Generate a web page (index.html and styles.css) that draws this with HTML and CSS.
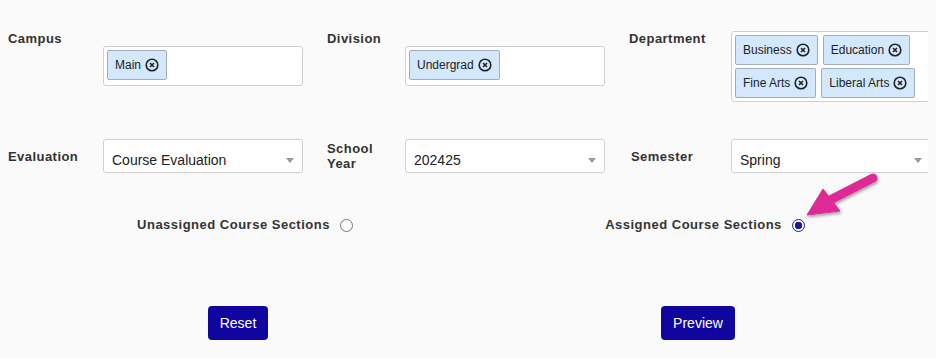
FILE: index.html
```html
<!DOCTYPE html>
<html lang="en">
<head>
    <meta charset="UTF-8">
    <meta name="viewport" content="width=device-width, initial-scale=1.0">
    <title>Course Section Report</title>
    <link rel="stylesheet" href="styles.css">
</head>
<body>
    <form class="report-form">
        <div class="filter-row filter-row-top">
            <div class="field field-1">
                <label class="field-label">Campus</label>
                <div class="multi-box">
                    <span class="chip">Main <span class="chip-x"><svg viewBox="0 0 14 14"><circle cx="7" cy="7" r="5.8"/><path d="M5 5l4 4M9 5l-4 4"/></svg></span></span>
                </div>
            </div>
            <div class="field field-2">
                <label class="field-label">Division</label>
                <div class="multi-box">
                    <span class="chip">Undergrad <span class="chip-x"><svg viewBox="0 0 14 14"><circle cx="7" cy="7" r="5.8"/><path d="M5 5l4 4M9 5l-4 4"/></svg></span></span>
                </div>
            </div>
            <div class="field field-3">
                <label class="field-label">Department</label>
                <div class="multi-box">
                    <span class="chip">Business <span class="chip-x"><svg viewBox="0 0 14 14"><circle cx="7" cy="7" r="5.8"/><path d="M5 5l4 4M9 5l-4 4"/></svg></span></span>
                    <span class="chip">Education <span class="chip-x"><svg viewBox="0 0 14 14"><circle cx="7" cy="7" r="5.8"/><path d="M5 5l4 4M9 5l-4 4"/></svg></span></span>
                    <span class="chip">Fine Arts <span class="chip-x"><svg viewBox="0 0 14 14"><circle cx="7" cy="7" r="5.8"/><path d="M5 5l4 4M9 5l-4 4"/></svg></span></span>
                    <span class="chip">Liberal Arts <span class="chip-x"><svg viewBox="0 0 14 14"><circle cx="7" cy="7" r="5.8"/><path d="M5 5l4 4M9 5l-4 4"/></svg></span></span>
                </div>
            </div>
        </div>

        <div class="filter-row filter-row-mid">
            <div class="field field-1">
                <label class="field-label">Evaluation</label>
                <div class="select-box">Course Evaluation <span class="caret"></span></div>
            </div>
            <div class="field field-2">
                <label class="field-label">School Year</label>
                <div class="select-box">202425 <span class="caret"></span></div>
            </div>
            <div class="field field-3">
                <label class="field-label semester">Semester</label>
                <div class="select-box">Spring <span class="caret"></span></div>
            </div>
        </div>

        <div class="half-row radio-row">
            <label class="radio-opt">Unassigned Course Sections <span class="radio"></span></label>
            <label class="radio-opt">Assigned Course Sections <span class="radio checked"></span></label>
        </div>

        <div class="half-row button-row">
            <div><button type="button" class="btn">Reset</button></div>
            <div><button type="button" class="btn">Preview</button></div>
        </div>
    </form>

    <!-- callout arrow pointing at the selected option -->
    <svg class="callout" width="936" height="358" viewBox="0 0 936 358">
        <defs>
            <filter id="shadow" x="-20%" y="-20%" width="140%" height="140%">
                <feDropShadow dx="1" dy="2" stdDeviation="1.5" flood-color="#000" flood-opacity="0.35"/>
            </filter>
        </defs>
        <g filter="url(#shadow)" fill="#dd2c97" stroke="#dd2c97">
            <line x1="873" y1="178" x2="832" y2="199" stroke-width="9" stroke-linecap="round"/>
            <polygon points="807,215 823,189 840,211" stroke-width="1" stroke-linejoin="round"/>
        </g>
    </svg>
</body>
</html>
```

FILE: styles.css
```css
html {
    overflow: hidden;
}
body {
    margin: 8px;
    background-color: #fafafa;
    font-family: "Liberation Sans", Arial, sans-serif;
    color: #222;
}
.report-form {
    padding-top: 22px;
}
.filter-row {
    display: grid;
    grid-template-columns: 319px 302px 302px;
    width: 923px;
}
.field {
    display: flex;
}
.field-1 .field-label { width: 95px; }
.field-2 .field-label { width: 78px; padding-right: 14px; }
.field-3 .field-label { width: 102px; }
.field-label {
    box-sizing: border-box;
    flex: none;
    font-size: 13px;
    font-weight: bold;
    color: #333;
    line-height: 15px;
    letter-spacing: 0.45px;
}
.filter-row-top {
    height: 72px;
}
.filter-row-top .field-label {
    padding-top: 1px;
}
.filter-row-top .field {
    align-items: flex-start;
}
.multi-box {
    box-sizing: border-box;
    flex: none;
    width: 200px;
    min-height: 40px;
    align-self: center;
    background: #fff;
    border: 1px solid #cfcfcf;
    border-radius: 3px;
    padding: 3px;
    display: flex;
    flex-wrap: wrap;
    gap: 3px 5px;
}
.chip {
    box-sizing: border-box;
    height: 30px;
    display: inline-flex;
    align-items: center;
    gap: 4px;
    padding: 0 7px;
    background: #d3e8fd;
    border: 1px solid #a3adb8;
    border-radius: 2px;
    font-size: 12px;
    color: #222;
}
.chip-x svg {
    display: block;
    width: 14px;
    height: 14px;
    fill: none;
    stroke: #222;
    stroke-width: 1.6;
}
.filter-row-mid {
    margin-top: 37px;
    align-items: center;
}
.filter-row-mid .field {
    align-items: center;
}
.filter-row-mid .semester {
    padding-left: 2px;
}
.select-box {
    box-sizing: border-box;
    flex: none;
    position: relative;
    width: 200px;
    height: 34px;
    background: #fff;
    border: 1px solid #cfcfcf;
    border-radius: 3px;
    padding: 7px 8px 0;
    display: flex;
    align-items: center;
    font-size: 14px;
    color: #222;
}
.caret {
    position: absolute;
    right: 8px;
    top: 18px;
    border-left: 4px solid transparent;
    border-right: 4px solid transparent;
    border-top: 5px solid #999;
}
.half-row {
    display: grid;
    grid-template-columns: 1fr 1fr;
}
.radio-row {
    margin-top: 42px;
    line-height: 20px;
}
.radio-opt {
    justify-self: center;
    padding-left: 14px;
    display: flex;
    align-items: center;
    gap: 10px;
    font-size: 13px;
    font-weight: bold;
    color: #333;
    letter-spacing: 0.5px;
}
.radio {
    box-sizing: border-box;
    width: 13px;
    height: 13px;
    border: 1px solid #767676;
    border-radius: 50%;
    background: #fff;
}
.radio.checked {
    border: 1.5px solid #1d1a9e;
    background: radial-gradient(circle, #1d1a9e 0 3.5px, #fff 4px);
}
.button-row {
    margin-top: 71px;
    justify-items: center;
}
.btn {
    height: 34px;
    padding: 0 12px;
    background: #10069f;
    color: #fff;
    border: none;
    border-radius: 4px;
    font-family: "Liberation Sans", Arial, sans-serif;
    font-size: 14px;
}
.callout {
    position: absolute;
    top: 0;
    left: 0;
    pointer-events: none;
}
```
